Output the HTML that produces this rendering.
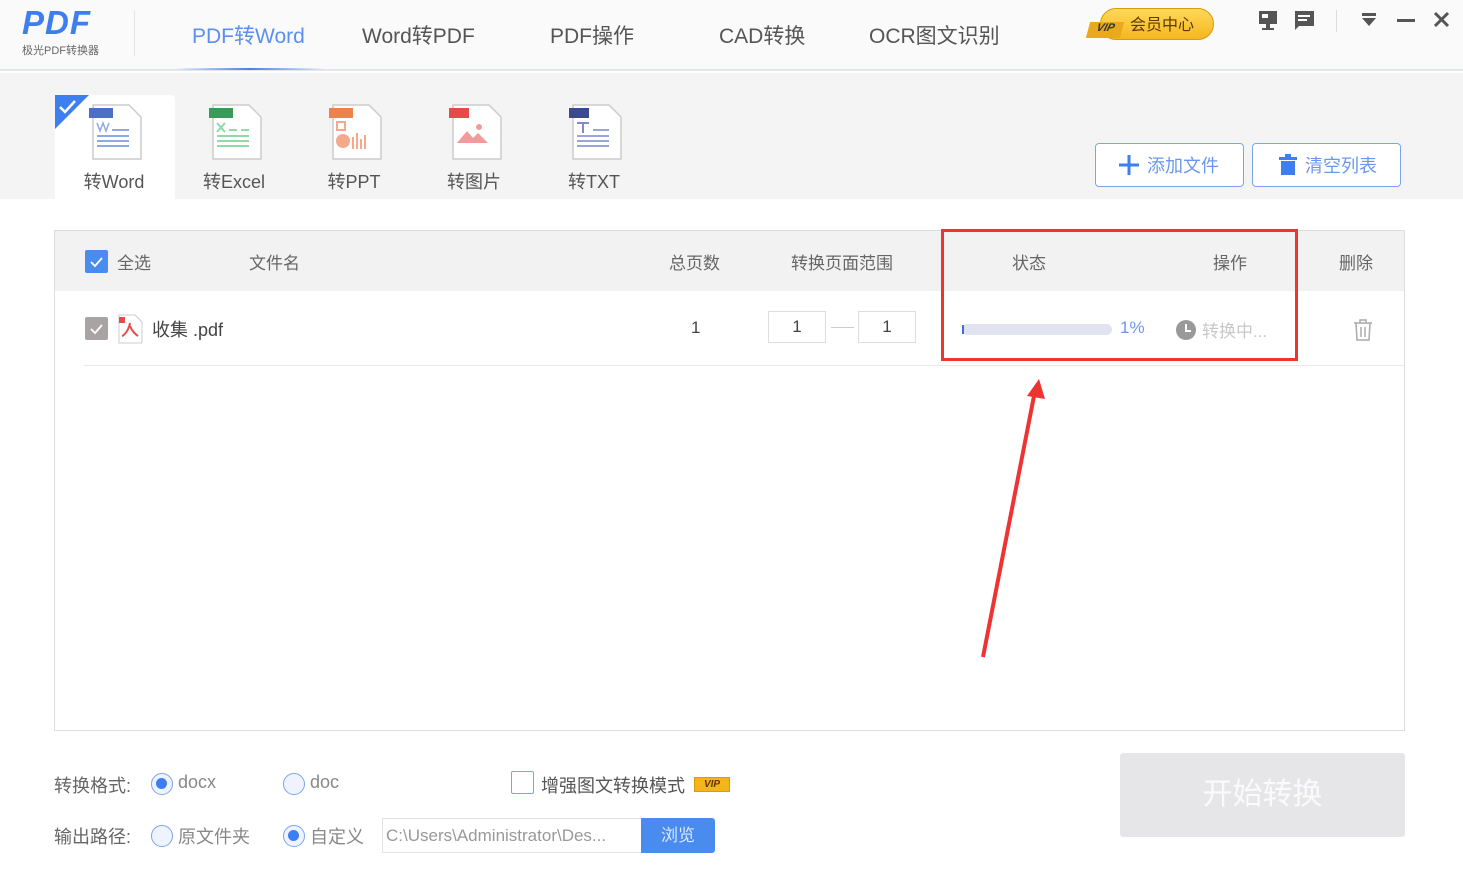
<!DOCTYPE html>
<html><head><meta charset="utf-8"><style>
*{margin:0;padding:0;box-sizing:border-box}
body{width:1463px;height:895px;background:#fff;font-family:"Liberation Sans","Noto Sans CJK SC",sans-serif;position:relative;overflow:hidden;color:#555}
.a{position:absolute}
.nav{font-size:21px;color:#555;top:20px}
.tb{font-size:18px;color:#555;text-align:center;width:120px;top:168px}
.hd{font-size:17px;color:#666;top:249px}
.rad{width:22px;height:22px;border:1.5px solid #7aa4f0;border-radius:50%;background:#eef3fd}
.rad.on::after{content:"";position:absolute;left:4px;top:4px;width:11px;height:11px;border-radius:50%;background:#3d7ef0}
.lab{font-size:18px;color:#666}
</style></head><body>
<div class="a" style="left:0;top:0;width:1463px;height:71px;background:#fafafa;border-bottom:2px solid #e3e6ee"></div>
<div class="a" style="left:22px;top:4px;font-size:33px;font-weight:bold;font-style:italic;color:#3d7ef0;letter-spacing:1px">PDF</div>
<div class="a" style="left:22px;top:42px;font-size:11px;color:#666">极光PDF转换器</div>
<div class="a" style="left:134px;top:10px;width:1px;height:46px;background:#e6e6e6"></div>
<div class="a nav" style="left:192px;color:#5b8ff0">PDF转Word</div>
<div class="a" style="left:175px;top:68px;width:150px;height:2px;background:linear-gradient(90deg,transparent,#4a80e8,transparent)"></div>
<div class="a nav" style="left:362px">Word转PDF</div>
<div class="a nav" style="left:550px">PDF操作</div>
<div class="a nav" style="left:719px">CAD转换</div>
<div class="a nav" style="left:869px">OCR图文识别</div>
<div class="a" style="left:1100px;top:8px;width:114px;height:32px;border-radius:16px;background:linear-gradient(#ffd85a,#f5b71e);border:1px solid #d99a10"></div>
<div class="a" style="left:1088px;top:22px;width:34px;height:16px;background:#e8a91a;transform:skew(-15deg);font-size:11px;font-weight:bold;font-style:italic;color:#333;text-align:center">VIP</div>
<div class="a" style="left:1130px;top:11px;font-size:16px;color:#5a3a00">会员中心</div>
<svg class="a" style="left:1256px;top:8px" width="200" height="26"><rect x="3" y="3" width="18" height="13" fill="#555"/><rect x="10" y="16" width="4" height="4" fill="#555"/><rect x="6" y="20" width="12" height="2" fill="#555"/><rect x="6" y="6" width="6" height="4" fill="#fff"/>
<path d="M39 3h19v15h-15l-4 4z" fill="#555"/><rect x="42" y="7" width="12" height="2" fill="#fff"/><rect x="42" y="11" width="9" height="2" fill="#fff"/>
<rect x="80" y="2" width="1" height="22" fill="#ddd"/>
<rect x="106" y="5" width="14" height="3" fill="#555"/><path d="M106 10h14l-7 8z" fill="#555"/>
<rect x="141" y="11" width="18" height="3" fill="#555"/>
<path d="M179 5l13 13M192 5l-13 13" stroke="#555" stroke-width="3"/></svg>
<div class="a" style="left:0;top:73px;width:1463px;height:126px;background:#f4f4f5"></div>
<div class="a" style="left:55px;top:95px;width:120px;height:104px;background:#fff;border-radius:4px 4px 0 0"></div>
<svg class="a" style="left:55px;top:95px" width="34" height="34"><path d="M0 0h34L0 34z" fill="#3d7ef0"/><path d="M5 12l5 5 10-11" stroke="#fff" stroke-width="2.5" fill="none"/></svg>
<svg class="a" style="left:85px;top:103px" width="560" height="58">
<g><path d="M8 2h36l12 12v42H8z" fill="#fff" stroke="#ccc" stroke-width="1.5"/><rect x="4" y="5" width="24" height="10" fill="#4a6fc8"/><path d="M12 20l3 8 3-8 3 8 3-8" stroke="#8fa9e6" fill="none" stroke-width="1.5"/><path d="M27 27h17M12 33h32M12 38h32M12 43h32" stroke="#8fa9e6" stroke-width="2"/></g>
<g transform="translate(120,0)"><path d="M8 2h36l12 12v42H8z" fill="#fff" stroke="#ccc" stroke-width="1.5"/><rect x="4" y="5" width="24" height="10" fill="#3a9a5a"/><path d="M12 20l8 9M20 20l-8 9" stroke="#8fdba6" stroke-width="2"/><path d="M24 27h8M36 27h8M12 33h32M12 38h32M12 43h32" stroke="#8fdba6" stroke-width="2"/></g>
<g transform="translate(240,0)"><path d="M8 2h36l12 12v42H8z" fill="#fff" stroke="#ccc" stroke-width="1.5"/><rect x="4" y="5" width="24" height="10" fill="#f08050"/><rect x="12" y="19" width="8" height="8" fill="none" stroke="#f5a98a" stroke-width="2"/><circle cx="18" cy="38" r="7" fill="#f5a98a"/><path d="M28 34v12M32 30v16M36 36v10M40 32v14" stroke="#f5a98a" stroke-width="2"/></g>
<g transform="translate(360,0)"><path d="M8 2h36l12 12v42H8z" fill="#fff" stroke="#ccc" stroke-width="1.5"/><rect x="4" y="5" width="20" height="10" fill="#e84a4a"/><path d="M12 40l10-12 6 7 5-5 10 10z" fill="#f59a9a"/><circle cx="34" cy="24" r="3" fill="#f59a9a"/></g>
<g transform="translate(480,0)"><path d="M8 2h36l12 12v42H8z" fill="#fff" stroke="#ccc" stroke-width="1.5"/><rect x="4" y="5" width="20" height="10" fill="#3a4a8a"/><path d="M12 20h12M18 20v10" stroke="#7f8cc8" stroke-width="2"/><path d="M28 27h16M12 33h32M12 38h32M12 43h32" stroke="#9aa5d8" stroke-width="2"/></g>
</svg>
<div class="a tb" style="left:54px">转Word</div>
<div class="a tb" style="left:174px">转Excel</div>
<div class="a tb" style="left:294px">转PPT</div>
<div class="a tb" style="left:414px">转图片</div>
<div class="a tb" style="left:534px">转TXT</div>
<div class="a" style="left:1095px;top:143px;width:149px;height:44px;border:1.5px solid #7aa4f0;border-radius:4px;background:#fff"></div>
<svg class="a" style="left:1118px;top:154px" width="22" height="22"><path d="M11 1v20M1 11h20" stroke="#3d7ef0" stroke-width="3"/></svg>
<div class="a" style="left:1147px;top:152px;font-size:18px;color:#6a98ee">添加文件</div>
<div class="a" style="left:1252px;top:143px;width:149px;height:44px;border:1.5px solid #7aa4f0;border-radius:4px;background:#fff"></div>
<svg class="a" style="left:1277px;top:154px" width="22" height="22"><rect x="2" y="3" width="18" height="3" fill="#3d7ef0"/><rect x="8" y="0" width="6" height="3" fill="#3d7ef0"/><rect x="4" y="7" width="14" height="14" fill="#3d7ef0"/></svg>
<div class="a" style="left:1305px;top:152px;font-size:18px;color:#6a98ee">清空列表</div>
<div class="a" style="left:54px;top:230px;width:1351px;height:501px;border:1.5px solid #ddd"></div>
<div class="a" style="left:55px;top:231px;width:1349px;height:60px;background:#f2f2f2"></div>
<div class="a" style="left:85px;top:250px;width:23px;height:23px;background:#4a8bf0;border-radius:2px"></div>
<svg class="a" style="left:85px;top:250px" width="23" height="23"><path d="M6 12l4 4 7-8" stroke="#fff" stroke-width="1.8" fill="none"/></svg>
<div class="a hd" style="left:117px">全选</div>
<div class="a hd" style="left:249px">文件名</div>
<div class="a hd" style="left:669px">总页数</div>
<div class="a hd" style="left:791px">转换页面范围</div>
<div class="a hd" style="left:1012px">状态</div>
<div class="a hd" style="left:1213px">操作</div>
<div class="a hd" style="left:1339px">删除</div>
<div class="a" style="left:85px;top:317px;width:23px;height:23px;background:#aaa3a3;border-radius:2px"></div>
<svg class="a" style="left:85px;top:317px" width="23" height="23"><path d="M6 12l4 4 7-8" stroke="#fff" stroke-width="1.8" fill="none"/></svg>
<svg class="a" style="left:116px;top:314px" width="28" height="30"><path d="M3 1h16l7 7v21H3z" fill="#fff" stroke="#ccc"/><rect x="3" y="3" width="6" height="6" fill="#e84a4a"/><path d="M14 9c-1 6-5 12-8 13M14 12c2 5 5 8 8 10" stroke="#e84a4a" stroke-width="2" fill="none"/></svg>
<div class="a" style="left:152px;top:316px;font-size:18px;color:#444">收集 .pdf</div>
<div class="a" style="left:691px;top:318px;font-size:17px;color:#444">1</div>
<div class="a" style="left:768px;top:311px;width:58px;height:32px;border:1px solid #ddd;font-size:17px;color:#444;text-align:center;line-height:30px">1</div>
<div class="a" style="left:831px;top:327px;width:23px;height:1px;background:#ccc"></div>
<div class="a" style="left:858px;top:311px;width:58px;height:32px;border:1px solid #ddd;font-size:17px;color:#444;text-align:center;line-height:30px">1</div>
<div class="a" style="left:962px;top:324px;width:150px;height:11px;border-radius:6px;background:#e2e3f0"></div>
<div class="a" style="left:962px;top:325px;width:2px;height:9px;background:#3d6ee0"></div>
<div class="a" style="left:1120px;top:318px;font-size:17px;color:#6a98ee">1%</div>
<svg class="a" style="left:1175px;top:319px" width="22" height="22"><circle cx="11" cy="11" r="10" fill="#999"/><path d="M11 5v7h5" stroke="#fff" stroke-width="2" fill="none"/></svg>
<div class="a" style="left:1202px;top:317px;font-size:17px;color:#c8c8c8">转换中...</div>
<svg class="a" style="left:1352px;top:318px" width="22" height="24"><path d="M2 5h18M8 5V2h6v3M4 5l1 17h12l1-17M9 9v10M13 9v10" stroke="#aaa" stroke-width="1.5" fill="none"/></svg>
<div class="a" style="left:84px;top:365px;width:1320px;height:1px;background:#e8e8e8"></div>
<div class="a" style="left:941px;top:229px;width:357px;height:132px;border:3px solid #ee3333"></div>
<svg class="a" style="left:0;top:0" width="1463" height="895"><path d="M983 657L1034 396" stroke="#ee3333" stroke-width="4"/><path d="M1039 379L1045 399L1027 396z" fill="#ee3333"/></svg>
<div class="a lab" style="left:54px;top:772px">转换格式:</div>
<div class="a rad on" style="left:151px;top:773px"></div>
<div class="a lab" style="left:178px;top:772px;color:#888">docx</div>
<div class="a rad" style="left:283px;top:773px"></div>
<div class="a lab" style="left:310px;top:772px;color:#888">doc</div>
<div class="a" style="left:511px;top:771px;width:23px;height:23px;border:1.5px solid #7aa4f0;border-radius:2px;background:#fff"></div>
<div class="a lab" style="left:541px;top:772px;color:#555">增强图文转换模式</div>
<div class="a" style="left:694px;top:777px;width:36px;height:15px;background:#f3b51c;border:1px solid #d99a10;font-size:10px;font-weight:bold;font-style:italic;color:#5a3a00;text-align:center;line-height:13px">VIP</div>
<div class="a lab" style="left:54px;top:823px">输出路径:</div>
<div class="a rad" style="left:151px;top:825px"></div>
<div class="a lab" style="left:178px;top:823px;color:#888">原文件夹</div>
<div class="a rad on" style="left:283px;top:825px"></div>
<div class="a lab" style="left:310px;top:823px;color:#888">自定义</div>
<div class="a" style="left:382px;top:818px;width:260px;height:35px;border:1px solid #e2e2e2;background:#fff;font-size:17px;color:#999;line-height:33px;padding-left:3px;white-space:nowrap;overflow:hidden">C:\Users\Administrator\Des...</div>
<div class="a" style="left:641px;top:818px;width:74px;height:35px;background:#4a8bf0;border-radius:0 3px 3px 0;color:#dbe8ff;font-size:17px;text-align:center;line-height:35px">浏览</div>
<div class="a" style="left:1120px;top:753px;width:285px;height:84px;background:#e6e6e8;border-radius:3px;color:#fafafa;font-size:30px;text-align:center;line-height:84px">开始转换</div>
</body></html>
